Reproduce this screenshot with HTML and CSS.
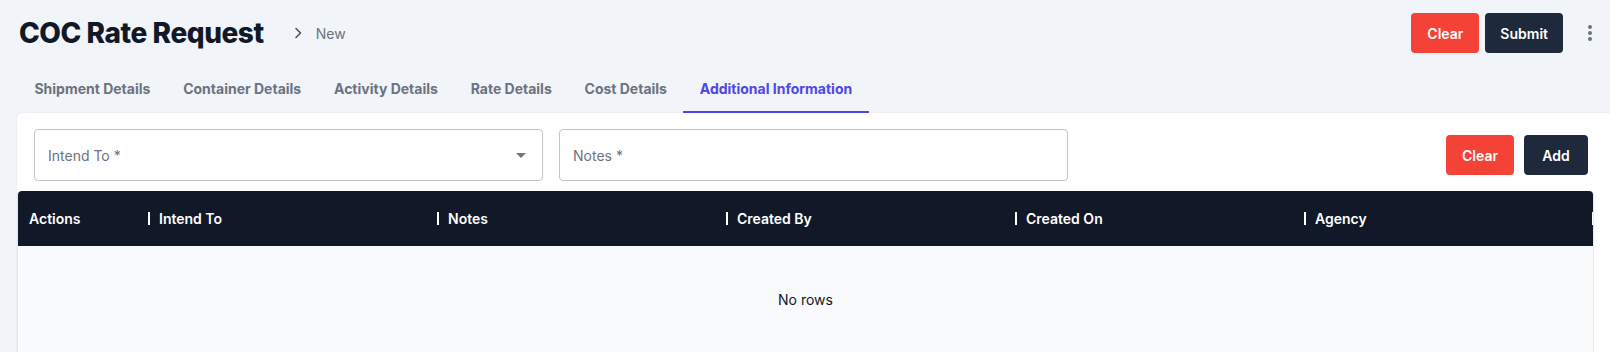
FILE: index.html
```html
<!DOCTYPE html>
<html>
<head>
<meta charset="utf-8">
<link rel="stylesheet" href="styles.css">
</head>
<body>
<div class="page">
  <header class="topbar">
    <div class="crumbs">
      <h1 class="title">COC Rate Request</h1>
      <svg class="chev" width="8" height="12" viewBox="0 0 8 12"><path d="M2 1.5 L6.5 6 L2 10.5" fill="none" stroke="#4b5563" stroke-width="1.6" stroke-linecap="round" stroke-linejoin="round"/></svg>
      <span class="crumb-new">New</span>
    </div>
    <div class="actions">
      <button class="btn btn-red">Clear</button>
      <button class="btn btn-dark">Submit</button>
      <button class="kebab" aria-label="more"><span></span><span></span><span></span></button>
    </div>
  </header>

  <nav class="tabs">
    <div class="tab">Shipment Details</div>
    <div class="tab">Container Details</div>
    <div class="tab">Activity Details</div>
    <div class="tab">Rate Details</div>
    <div class="tab">Cost Details</div>
    <div class="tab active">Additional Information</div>
  </nav>

  <section class="card">
    <div class="form-row">
      <div class="field select">
        <span class="label">Intend To *</span>
        <svg class="arrow" width="10" height="5" viewBox="0 0 10 5"><path d="M0 0 L10 0 L5 5 Z" fill="#757575"/></svg>
      </div>
      <div class="field">
        <span class="label">Notes *</span>
      </div>
      <div class="spacer"></div>
      <button class="btn btn-red">Clear</button>
      <button class="btn btn-dark">Add</button>
    </div>

    <div class="grid">
      <div class="grid-head">
        <div class="hcell first">Actions</div>
        <div class="hcell"><i class="sep"></i>Intend To</div>
        <div class="hcell"><i class="sep"></i>Notes</div>
        <div class="hcell"><i class="sep"></i>Created By</div>
        <div class="hcell"><i class="sep"></i>Created On</div>
        <div class="hcell last"><i class="sep"></i>Agency<i class="sep end"></i></div>
      </div>
      <div class="grid-body">
        <span class="empty">No rows</span>
      </div>
    </div>
  </section>
</div>
</body>
</html>
```

FILE: styles.css
```css
* { box-sizing: border-box; }
html, body { margin: 0; padding: 0; }
body {
  background: #f1f4f9;
  font-family: Inter, "Noto Sans", sans-serif;
  color: #111827;
  overflow: hidden;
}
.page { width: 1610px; }

.topbar {
  display: flex;
  align-items: center;
  justify-content: space-between;
  padding: 13px 8px 12px 19px;
  height: 65px;
}
.crumbs { display: flex; align-items: center; }
.title {
  margin: 0;
  font-size: 28px;
  font-weight: 800;
  letter-spacing: -0.45px;
  line-height: 40px;
  color: #111827;
}
.chev { margin-left: 30px; margin-right: 14px; }
.crumb-new { font-size: 14px; color: #6b7280; }

.actions { display: flex; align-items: center; }
.btn {
  height: 40px;
  min-width: 64px;
  padding: 0 16px;
  border: none;
  border-radius: 4px;
  font-family: Inter, sans-serif;
  font-size: 14px;
  font-weight: 600;
  color: #fff;
  cursor: pointer;
}
.btn-red { background: #f44336; }
.btn-dark { background: #1e293b; }
.actions .btn-red { margin-right: 6px; }
.actions .btn-dark { padding: 0 15px; }
.kebab {
  margin-left: 15px;
  width: 24px;
  height: 24px;
  background: none;
  border: none;
  padding: 0;
  display: flex;
  flex-direction: column;
  align-items: center;
  justify-content: center;
  gap: 2px;
}
.kebab span { width: 4px; height: 4px; border-radius: 50%; background: #6b7280; }

.tabs {
  display: flex;
  height: 48px;
  margin-left: 18px;
}
.tab {
  padding: 0 16.4px;
  height: 48px;
  line-height: 48px;
  font-size: 14px;
  font-weight: 700;
  color: #6b7280;
  white-space: nowrap;
}
.tab.active {
  color: #4f46e5;
  box-shadow: inset 0 -2px 0 #4f46e5;
}

.card {
  margin-left: 17px;
  background: #fff;
  border-top-left-radius: 6px;
  box-shadow: 0 0 0 1px #eceff4;
  height: 239px;
}
.form-row {
  display: flex;
  align-items: center;
  padding: 16px 22px 10px 17px;
}
.field {
  width: 509px;
  height: 52px;
  border: 1px solid #c4c4c4;
  border-radius: 4px;
  display: flex;
  align-items: center;
  justify-content: space-between;
  padding: 0 16px 0 13px;
  margin-right: 16px;
}
.label { font-size: 14px; color: #6b7280; }
.spacer { flex: 1; }
.form-row .btn-red { margin-right: 10px; }

.grid {
  width: 1577px;
  border-left: 1px solid #e5e7eb;
  border-right: 1px solid #e5e7eb;
  border-radius: 4px 4px 0 0;
}
.grid-head {
  display: flex;
  height: 55px;
  background: #111827;
  border-radius: 4px 4px 0 0;
  overflow: hidden;
}
.hcell {
  width: 289px;
  display: flex;
  align-items: center;
  font-size: 14px;
  font-weight: 600;
  color: #fff;
  white-space: nowrap;
}
.hcell.first { width: 130px; padding-left: 11px; }
.sep {
  display: block;
  width: 2px;
  height: 13px;
  background: #fff;
  margin-right: 9px;
}
.sep.end { margin: 0 0 0 auto; width: 1px; }
.grid-body {
  height: 106px;
  background: #f9fafb;
  display: flex;
  align-items: center;
  justify-content: center;
}
.empty { font-size: 14px; color: #111827; }
```
